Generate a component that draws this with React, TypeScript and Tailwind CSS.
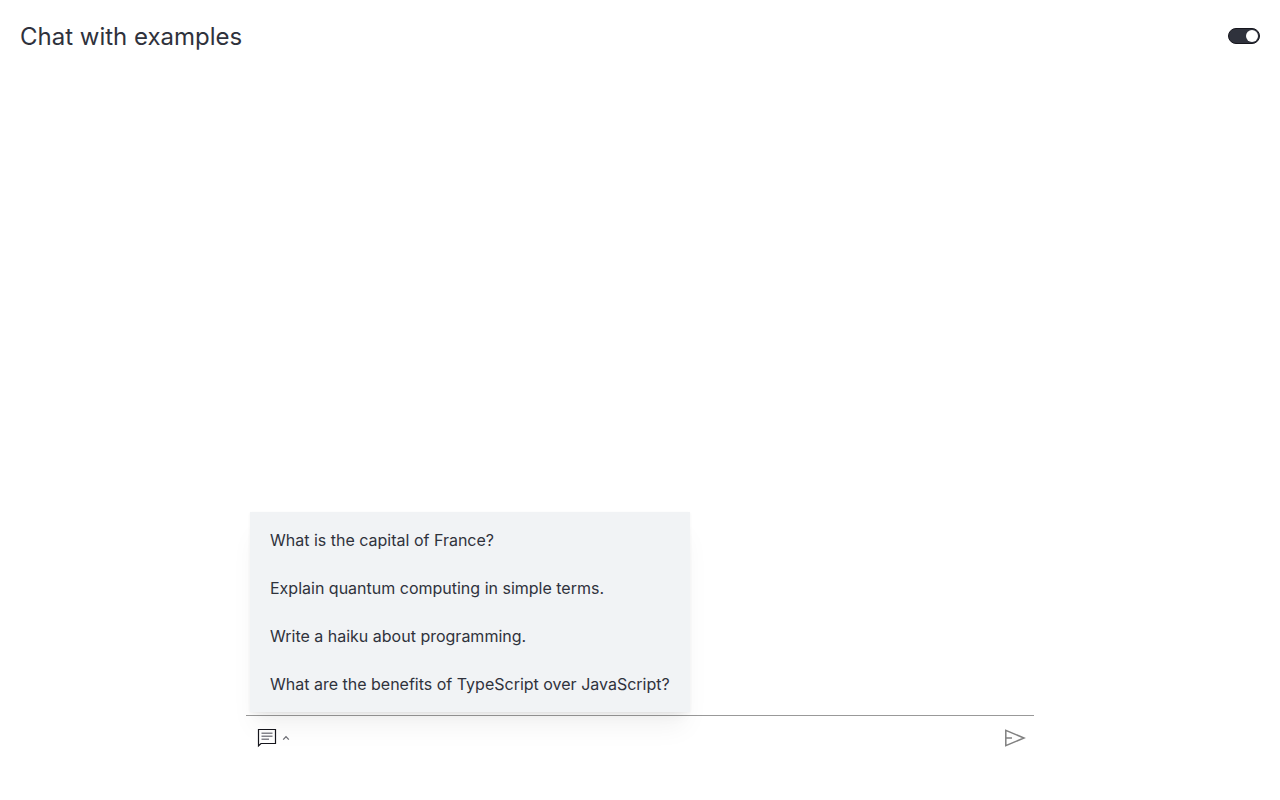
import React, { useState } from "react";

const examples = [
  "What is the capital of France?",
  "Explain quantum computing in simple terms.",
  "Write a haiku about programming.",
  "What are the benefits of TypeScript over JavaScript?",
];

function MessageIcon() {
  return (
    <svg className="h-6 w-6" viewBox="0 0 24 24" fill="none" stroke="#16161d">
      <path d="M4.5 3.5h17v14H7l-2.5 2.3z" strokeWidth="1.2" />
      <g stroke="#85858c" strokeWidth="1.6">
        <path d="M7.5 7.3h11M7.5 10.3h11M7.5 13.3h7.5" />
      </g>
    </svg>
  );
}

function SendIcon() {
  return (
    <svg
      className="h-6 w-6"
      viewBox="0 0 24 24"
      fill="none"
      stroke="currentColor"
      strokeWidth="1.5"
    >
      <path d="M3.8 4.4v15.2L22 12z" />
      <path d="M4 12h6" />
    </svg>
  );
}

export default function App() {
  const [darkMode, setDarkMode] = useState(false);
  const [menuOpen, setMenuOpen] = useState(true);
  const [prompt, setPrompt] = useState("");

  return (
    <div className="flex min-h-screen flex-col bg-white font-['Inter',sans-serif] text-[#2f323c]">
      <header className="flex items-center justify-between px-5 py-[15px]">
        <h1 className="pt-0.5 text-2xl leading-10">Chat with examples</h1>
        <label className="flex cursor-pointer">
          <input
            type="checkbox"
            role="switch"
            aria-label="Dark mode"
            className="peer sr-only"
            checked={darkMode}
            onChange={(e) => setDarkMode(e.target.checked)}
          />
          <span className="flex h-4 w-8 items-center justify-end rounded-full border border-[#16161d] bg-[#2f323c] px-px peer-checked:justify-start">
            <span className="h-3 w-3 rounded-full bg-white" />
          </span>
        </label>
      </header>
      <main className="grow" />
      <form
        className="mx-auto mb-10 w-full max-w-[788px] border-t border-[#999]"
        onSubmit={(e) => e.preventDefault()}
      >
        <div className="flex h-11 items-center px-2">
          <div className="relative">
            <button
              type="button"
              aria-label="Examples"
              aria-expanded={menuOpen}
              className="flex items-center"
              onClick={() => setMenuOpen(!menuOpen)}
            >
              <MessageIcon />
              <svg
                className="ml-1 h-2 w-2"
                viewBox="0 0 8 8"
                fill="none"
                stroke="#6b6c73"
                strokeWidth="1.3"
              >
                <path d="M1.2 5.6L4 2.6l2.8 3" />
              </svg>
            </button>
            {menuOpen && (
              <ul className="absolute bottom-full -left-1 mb-3.5 bg-[#f1f3f5] py-1 shadow-[0_1px_3px_rgba(0,0,0,0.05),0_20px_25px_-5px_rgba(0,0,0,0.05),0_10px_10px_-5px_rgba(0,0,0,0.04)]">
                {examples.map((example) => (
                  <li key={example}>
                    <button
                      type="button"
                      className="w-full px-5 py-3 text-left text-base leading-6 whitespace-nowrap hover:bg-gray-200"
                      onClick={() => setPrompt(example)}
                    >
                      {example}
                    </button>
                  </li>
                ))}
              </ul>
            )}
          </div>
          <input
            type="text"
            aria-label="Message"
            className="mx-3 min-w-0 grow text-base outline-none"
            value={prompt}
            onChange={(e) => setPrompt(e.target.value)}
          />
          <button type="submit" aria-label="Send" className="text-[#808080]">
            <SendIcon />
          </button>
        </div>
      </form>
    </div>
  );
}
